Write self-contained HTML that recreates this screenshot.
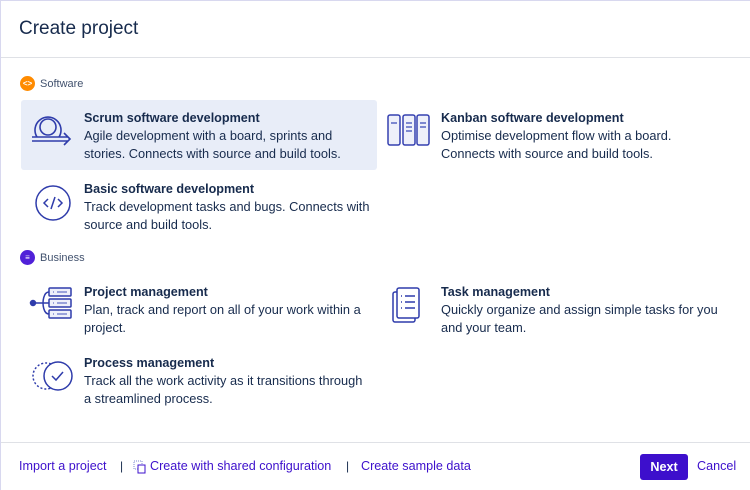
<!DOCTYPE html>
<html><head><style>
*{margin:0;padding:0;box-sizing:border-box}
body{width:750px;height:490px;background:#fff;font-family:"Liberation Sans",sans-serif;color:#172b4d;position:relative;overflow:hidden;border-left:1px solid #d8d8ef;border-top:1px solid #d8d8ef}
.abs{position:absolute}
h1{position:absolute;left:18px;top:17px;font-size:19px;font-weight:normal;color:#172b4d}
.hr{position:absolute;left:0;width:750px;height:1px;background:#dfe1e6}
.sec{position:absolute;left:19px;font-size:11px;color:#42526e;display:flex;align-items:center;gap:5px}
.dot{width:15px;height:15px;border-radius:50%;display:inline-flex;align-items:center;justify-content:center;color:#fff;font-size:8px;font-weight:bold}
.item{position:absolute;font-size:12.8px;line-height:18px;color:#172b4d}
.item b{display:block;font-size:12.6px}
.sel{position:absolute;left:20px;top:99px;width:356px;height:70px;background:#e8edf8;border-radius:3px}
.ft{position:absolute;top:458px;font-size:12.6px;color:#3d10cc}
.sep{position:absolute;top:458px;font-size:12px;color:#172b4d}
</style></head><body>
<h1>Create project</h1>
<div class="hr" style="top:56px"></div>
<div class="sec" style="top:75px"><span class="dot" style="background:#ff8b00">&lt;&gt;</span>Software</div>
<div class="sel"></div>
<svg class="abs" style="left:28px;top:110px" width="46" height="38" viewBox="0 0 46 38" fill="none" stroke="#2f3cab" stroke-width="1.6"><path d="M8 26A13 13 0 1 1 30 26"/><circle cx="19" cy="16" r="8"/><path d="M3 26h36M3 30h36M35 22l6 6-6 6"/></svg>
<div class="item" style="left:83px;top:108px"><b>Scrum software development</b>Agile development with a board, sprints and<br>stories. Connects with source and build tools.</div>
<svg class="abs" style="left:386px;top:113px" width="46" height="32" viewBox="0 0 46 32" fill="#eef0fa" stroke="#3540b0" stroke-width="1.5"><rect x="1" y="1" width="12" height="30" rx="2"/><rect x="16" y="1" width="12" height="30" rx="2"/><rect x="30" y="1" width="12" height="30" rx="2"/><path d="M4 9h6M19 9h6M19 13h6M19 17h6M33 9h6M33 13h6" stroke="#7d88d0" stroke-width="2"/></svg>
<div class="item" style="left:440px;top:108px"><b>Kanban software development</b>Optimise development flow with a board.<br>Connects with source and build tools.</div>
<svg class="abs" style="left:33px;top:183px" width="38" height="38" viewBox="0 0 38 38" fill="none" stroke="#2f3cab" stroke-width="1.5"><circle cx="19" cy="19" r="17"/><path d="M14 15l-4 4 4 4M24 15l4 4-4 4M21 13l-4 12"/></svg>
<div class="item" style="left:83px;top:179px"><b>Basic software development</b>Track development tasks and bugs. Connects with<br>source and build tools.</div>
<div class="sec" style="top:249px"><span class="dot" style="background:#5021d8">≡</span>Business</div>
<svg class="abs" style="left:28px;top:285px" width="46" height="36" viewBox="0 0 46 36" fill="#eef0fa" stroke="#2f3cab" stroke-width="1.5"><rect x="20" y="2" width="22" height="8" rx="1"/><rect x="20" y="13" width="22" height="8" rx="1"/><rect x="20" y="24" width="22" height="8" rx="1"/><path d="M4 17h16M20 6c-6 0-6 11-6 11s0 11 6 11" fill="none"/><circle cx="4" cy="17" r="2.5" fill="#2f3cab"/><path d="M24 6h1M28 6h10M24 17h1M28 17h10M24 28h1M28 28h10" stroke="#7d88d0"/></svg>
<div class="item" style="left:83px;top:282px"><b>Project management</b>Plan, track and report on all of your work within a<br>project.</div>
<svg class="abs" style="left:390px;top:285px" width="36" height="40" viewBox="0 0 36 40" fill="none" stroke="#2f3cab" stroke-width="1.5"><rect x="2" y="6" width="22" height="30" rx="2"/><rect x="6" y="2" width="22" height="30" rx="2" fill="#fff"/><path d="M10 10h1M14 10h10M10 16h1M14 16h10M10 22h1M14 22h10"/></svg>
<div class="item" style="left:440px;top:282px"><b>Task management</b>Quickly organize and assign simple tasks for you<br>and your team.</div>
<svg class="abs" style="left:30px;top:357px" width="44" height="36" viewBox="0 0 44 36" fill="none" stroke="#2f3cab" stroke-width="1.5"><circle cx="15" cy="18" r="13" stroke-dasharray="2 2"/><circle cx="27" cy="18" r="14" fill="#fff"/><path d="M21 18l4 4 7-8"/></svg>
<div class="item" style="left:83px;top:353px"><b>Process management</b>Track all the work activity as it transitions through<br>a streamlined process.</div>
<div class="hr" style="top:441px"></div>
<div class="ft" style="left:18px">Import a project</div>
<div class="sep" style="left:119px">|</div>
<svg class="abs" style="left:132px;top:459px" width="14" height="14" viewBox="0 0 14 14" fill="none" stroke="#7d88d0" stroke-width="1"><rect x="1" y="1" width="8" height="8" stroke-dasharray="1 1"/><rect x="5" y="5" width="7" height="8" fill="#fff" stroke="#3d10cc"/></svg>
<div class="ft" style="left:149px">Create with shared configuration</div>
<div class="sep" style="left:345px">|</div>
<div class="ft" style="left:360px">Create sample data</div>
<div class="abs" style="left:639px;top:453px;width:48px;height:26px;background:#3d0fcc;border-radius:3px;color:#fff;font-weight:bold;font-size:12.6px;text-align:center;line-height:26px">Next</div>
<div class="ft" style="left:696px">Cancel</div>
</body></html>
